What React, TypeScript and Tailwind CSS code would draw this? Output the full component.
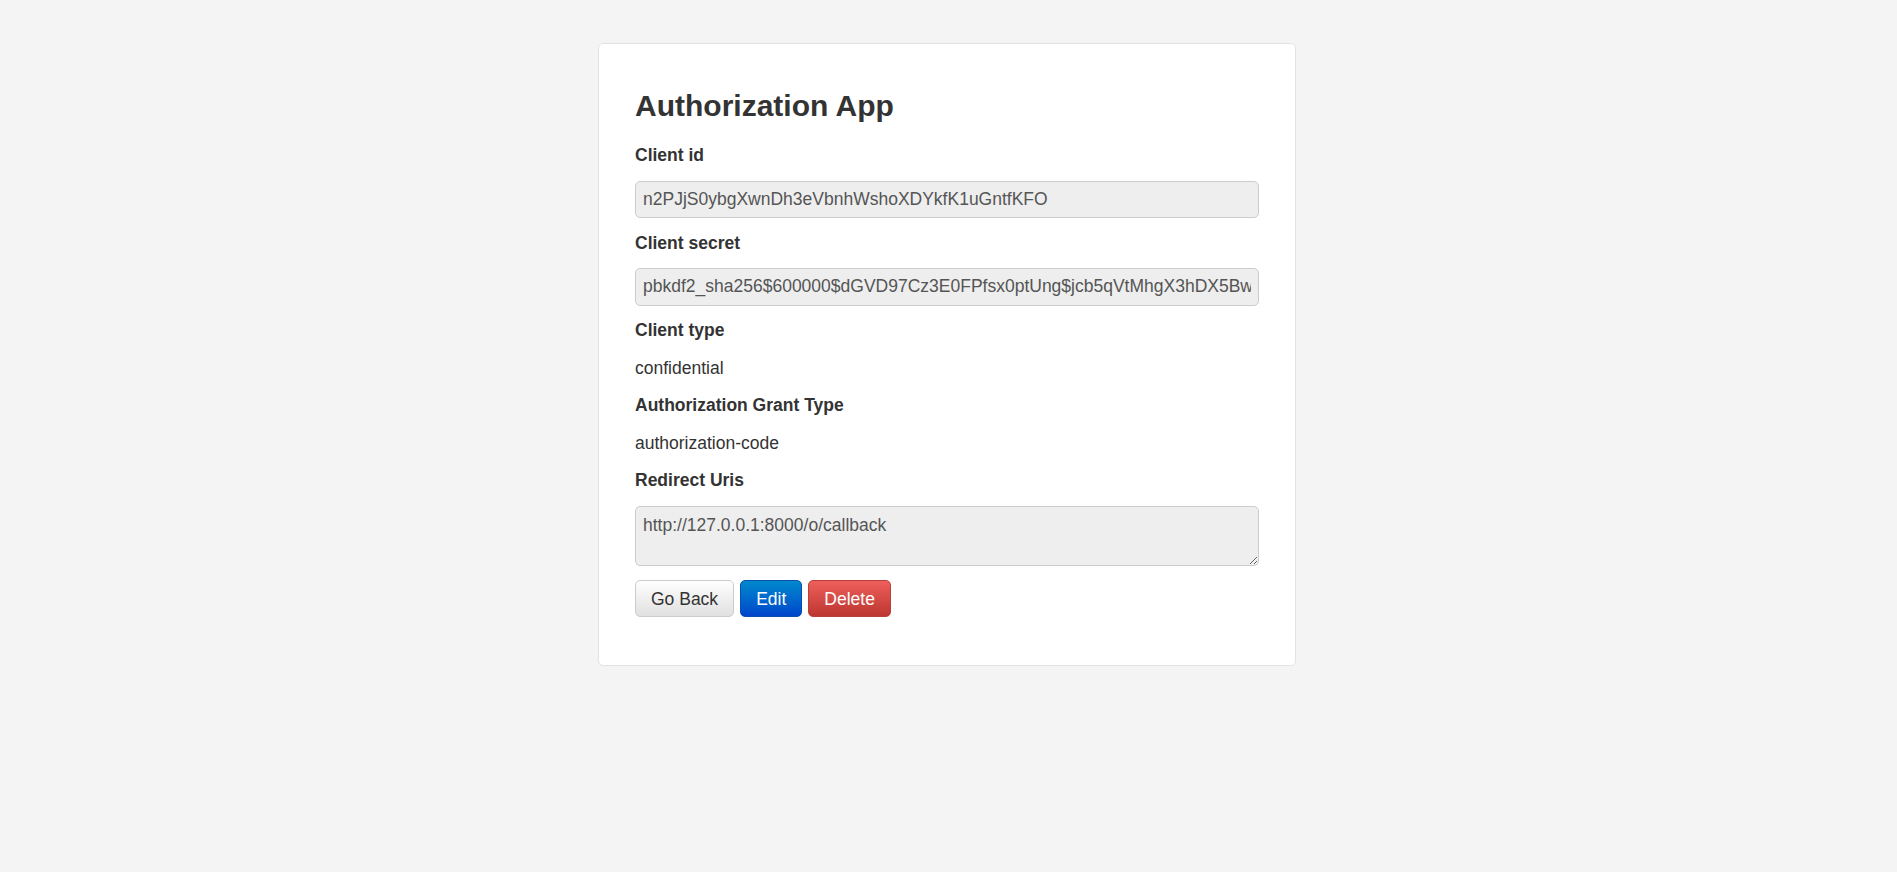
import React from "react";

export default function App() {
  const secret =
    "pbkdf2_sha256$600000$dGVD97Cz3E0FPfsx0ptUng$jcb5qVtMhgX3hDX5BwQ8kTzR2nLpYv0sXeA7uWmF1oJd4Hc9Gb=";
  return (
    <div className="min-h-[872px] w-full bg-[#f4f4f4] pt-[43px] pr-[3px] font-['Liberation_Sans',Arial,sans-serif] text-[17.5px] leading-[25px] text-[#333]">
      <div className="mx-auto w-[698px] rounded-[5px] border border-[#e3e3e3] bg-white px-[36px] pt-[44.5px] pb-[48px]">
        <h3 className="text-[30px] leading-[33px] font-bold text-[#333]">Authorization App</h3>
        <div className="mt-[21.5px] flex flex-col gap-[12.5px]">
          <label className="block font-bold">Client id</label>
          <input
            readOnly
            value="n2PJjS0ybgXwnDh3eVbnhWshoXDYkfK1uGntfKFO"
            className="block h-[37.5px] w-full rounded-[5px] border border-[#cccccc] bg-[#eeeeee] px-[7px] text-[17.5px] leading-[25px] text-[#555] outline-none"
          />
          <label className="block font-bold">Client secret</label>
          <input
            readOnly
            value={secret}
            className="block h-[37.5px] w-full rounded-[5px] border border-[#cccccc] bg-[#eeeeee] px-[7px] text-[17.5px] leading-[25px] text-[#555] outline-none"
          />
          <label className="block font-bold">Client type</label>
          <p>confidential</p>
          <label className="block font-bold">Authorization Grant Type</label>
          <p>authorization-code</p>
          <label className="block font-bold">Redirect Uris</label>
          <textarea
            readOnly
            value="http://127.0.0.1:8000/o/callback"
            className="block h-[60.5px] w-full rounded-[5px] border border-[#cccccc] bg-[#eeeeee] px-[7px] pt-[6px] text-[17.5px] leading-[25px] text-[#555] outline-none"
          />
        </div>
        <div className="mt-[14px] flex gap-[6px]">
          <button className="h-[37px] rounded-[5px] border border-[#cccccc] bg-linear-to-b from-white to-[#e0e0e0] px-[15px] text-[17.5px] leading-[20px] text-[#333]">
            Go Back
          </button>
          <button className="h-[37px] rounded-[5px] border border-[#0a4fae] bg-linear-to-b from-[#0088cc] to-[#0044cc] px-[15px] text-[17.5px] leading-[20px] text-white">
            Edit
          </button>
          <button className="h-[37px] rounded-[5px] border border-[#b9403a] bg-linear-to-b from-[#ee5f5b] to-[#bd362f] px-[15px] text-[17.5px] leading-[20px] text-white">
            Delete
          </button>
        </div>
      </div>
    </div>
  );
}
